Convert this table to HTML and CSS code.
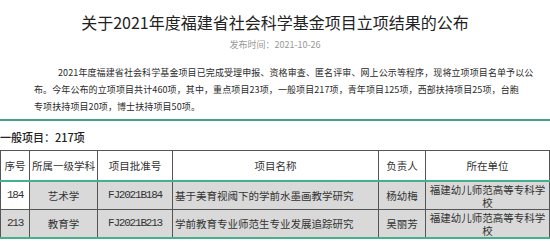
FILE: index.html
```html
<!DOCTYPE html>
<html lang="zh-CN">
<head>
<meta charset="utf-8">
<title>关于2021年度福建省社会科学基金项目立项结果的公布</title>
<link rel="stylesheet" href="styles.css">
</head>
<body>
<div class="page">
  <h1 class="title">关于2021年度福建省社会科学基金项目立项结果的公布</h1>
  <div class="meta">发布时间：2021-10-26</div>
  <p class="intro">2021年度福建省社会科学基金项目已完成受理申报、资格审查、匿名评审、网上公示等程序，现将立项项目名单予以公<br>布。今年公布的立项项目共计460项，其中，重点项目23项，一般项目217项，青年项目125项，西部扶持项目25项，台胞<br>专项扶持项目20项，博士扶持项目50项。</p>
  <div class="rule"></div>
  <h2 class="section">一般项目：217项</h2>
  <table class="list">
    <colgroup>
      <col class="c1"><col class="c2"><col class="c3"><col class="c4"><col class="c5"><col class="c6">
    </colgroup>
    <thead>
      <tr><th>序号</th><th>所属一级学科</th><th>项目批准号</th><th>项目名称</th><th>负责人</th><th>所在单位</th></tr>
    </thead>
    <tbody>
      <tr class="first"><td class="num white">184</td><td>艺术学</td><td class="code">FJ2021B184</td><td class="name">基于美育视阈下的学前水墨画教学研究</td><td>杨幼梅</td><td>福建幼儿师范高等专科学校</td></tr>
      <tr class="last"><td class="num">213</td><td>教育学</td><td class="code">FJ2021B213</td><td class="name">学前教育专业师范生专业发展追踪研究</td><td>吴丽芳</td><td>福建幼儿师范高等专科学校</td></tr>
    </tbody>
  </table>
</div>
</body>
</html>
```
FILE: styles.css
```css
html, body {
  margin: 0;
  padding: 0;
  background: #ffffff;
}
.page {
  width: 550px;
  font-family: "Noto Sans CJK SC", "Noto Sans", sans-serif;
  color: #333;
}
.title {
  margin: 0;
  padding-top: 10px;
  font-size: 16px;
  line-height: 24px;
  font-weight: normal;
  color: #222;
  text-align: center;
}
.meta {
  margin-top: 4px;
  font-size: 9px;
  line-height: 14px;
  color: #999;
  text-align: center;
}
.intro {
  margin: 12px 0 0;
  padding: 0 6px 0 34px;
  font-size: 9px;
  line-height: 17px;
  letter-spacing: 0.1px;
  text-indent: 24px;
  white-space: nowrap;
  color: #2a2a2a;
}
.rule {
  margin-top: 4px;
  height: 2px;
  background: #46a083;
}
.section {
  margin: 8px 0 0;
  font-size: 11px;
  line-height: 16px;
  font-weight: 500;
  color: #222;
}
.list {
  margin-top: 5px;
  width: 549px;
  border-collapse: collapse;
  table-layout: fixed;
  font-size: 10.5px;
  color: #333;
}
.c1 { width: 29px; }
.c2 { width: 68px; }
.c3 { width: 75px; }
.c4 { width: 206px; }
.c5 { width: 47px; }
.c6 { width: 124px; }
.list th, .list td {
  border: 1px solid #555;
  text-align: center;
  padding: 0 2px;
  font-weight: normal;
}
.list th {
  height: 29px;
  background: #fff;
}
.list td {
  height: 27px;
  line-height: 13px;
  background: #d9d9d9;
}
.list td.white { background: #fff; }
.list td.name { text-align: left; }
.list td.num, .list td.code {
  font-family: "Liberation Mono", monospace;
  letter-spacing: -1.2px;
  font-size: 11px;
}
.list tr.first td { border-top: 2px solid #46b08a; }
.list tr.last td { border-bottom: 2px solid #46b08a; }
```
